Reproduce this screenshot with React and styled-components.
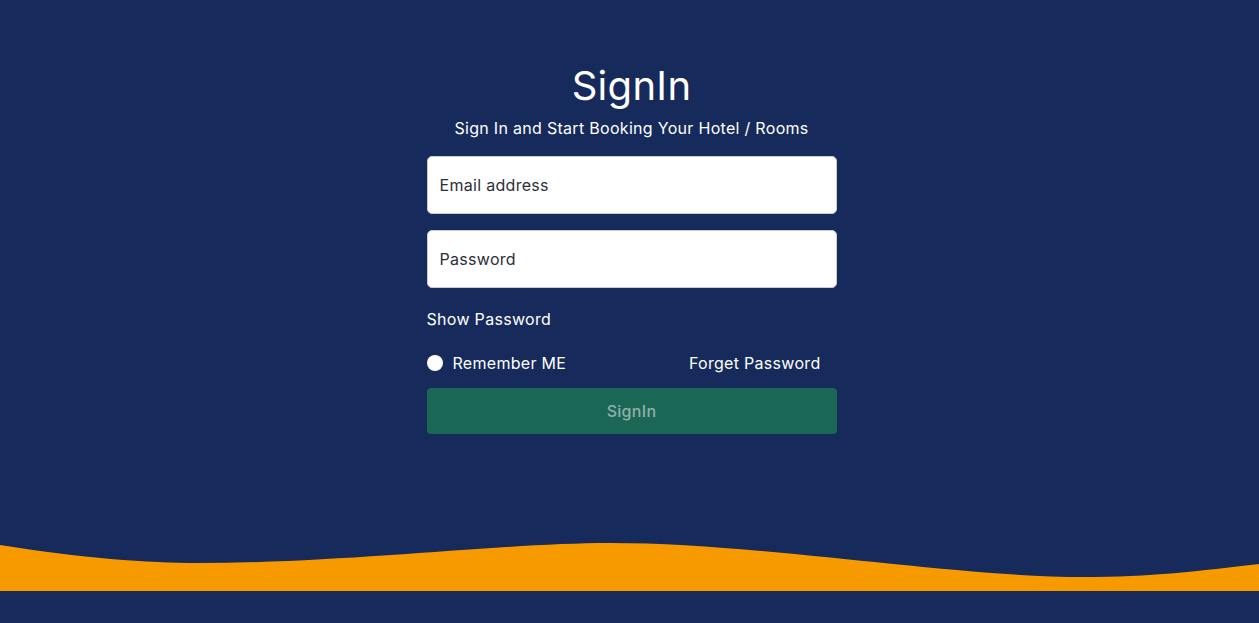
import React from "react";
import styled, { createGlobalStyle } from "styled-components";

const GlobalStyle = createGlobalStyle`
  * { box-sizing: border-box; }
  body {
    margin: 0;
    background: #162b5b;
    font-family: "Inter", "Noto Sans", sans-serif;
    letter-spacing: 0.3px;
  }
`;

const Page = styled.div`
  min-height: 100vh;
  display: flex;
  flex-direction: column;
  padding-bottom: 32px;
`;

const Main = styled.main`
  flex: 1;
  display: flex;
  flex-direction: column;
  align-items: center;
  padding: 60px 0 0 4px;
`;

const Title = styled.h1`
  margin: 0;
  color: #fff;
  font-size: 40px;
  font-weight: 400;
  line-height: 52px;
`;

const Subtitle = styled.p`
  margin: 4px 0 16px;
  color: #fff;
  font-size: 16px;
  line-height: 24px;
`;

const Form = styled.form`
  width: 410px;
  display: flex;
  flex-direction: column;
`;

const Input = styled.input`
  height: 58px;
  margin-bottom: 16px;
  padding: 0 12px;
  border: 1px solid #c8cdd6;
  border-radius: 5px;
  background: #fff;
  font-family: inherit;
  font-size: 16px;
  letter-spacing: inherit;
  color: #222;
  outline: none;

  &::placeholder {
    color: #2b2f38;
  }
`;

const Toggle = styled.span`
  margin-top: 3px;
  color: #fff;
  font-size: 16px;
  line-height: 24px;
`;

const Row = styled.div`
  display: flex;
  align-items: center;
  justify-content: space-between;
  margin-top: 20px;
  padding-right: 16px;
  height: 24px;
`;

const Check = styled.label`
  display: flex;
  align-items: center;
  gap: 10px;
  color: #fff;
  font-size: 16px;
`;

const Radio = styled.span`
  width: 16px;
  height: 16px;
  border-radius: 50%;
  background: #fff;
`;

const Link = styled.span`
  color: #fff;
  font-size: 16px;
`;

const Button = styled.button`
  margin-top: 13px;
  height: 46px;
  border: none;
  border-radius: 4px;
  background: #1b6756;
  color: #8fb0ab;
  font-family: inherit;
  font-size: 16px;
  font-weight: 500;
  letter-spacing: inherit;
`;

const Wave = styled.svg`
  display: block;
  width: 100%;
  height: 51px;
`;

export default function App() {
  return (
    <>
      <GlobalStyle />
      <Page>
        <Main>
          <Title>SignIn</Title>
          <Subtitle>Sign In and Start Booking Your Hotel / Rooms</Subtitle>
          <Form onSubmit={(e) => e.preventDefault()}>
            <Input type="email" placeholder="Email address" />
            <Input type="password" placeholder="Password" />
            <Toggle>Show Password</Toggle>
            <Row>
              <Check>
                <Radio />
                Remember ME
              </Check>
              <Link>Forget Password</Link>
            </Row>
            <Button type="submit">SignIn</Button>
          </Form>
        </Main>
        <Wave viewBox="0 0 1259 51" preserveAspectRatio="none">
          <path
            d="M0 5 C80 18 150 23 197 23 C350 23 500 3 610 3 C760 3 950 37 1084 37 C1150 37 1200 31 1259 24 L1259 51 L0 51 Z"
            fill="#f79a00"
          />
        </Wave>
      </Page>
    </>
  );
}
